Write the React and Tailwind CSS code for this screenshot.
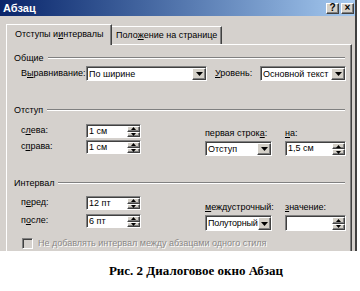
import React from "react";

const raised =
  "bg-[#d4d0c8] border border-t-white border-l-white border-r-[#404040] border-b-[#404040] shadow-[inset_-1px_-1px_0_#808080]";
const sunken =
  "bg-white border border-t-[#808080] border-l-[#808080] border-r-white border-b-white shadow-[inset_1px_1px_0_#404040]";

function U({ children }) {
  return <span className="underline underline-offset-[1px] decoration-1">{children}</span>;
}

function ArrowUp() {
  return (
    <svg width="5" height="3" viewBox="0 0 5 3">
      <polygon points="2.5,0 5,3 0,3" fill="#000" />
    </svg>
  );
}
function ArrowDown({ w = 5, h = 3 }) {
  return (
    <svg width={w} height={h} viewBox={`0 0 ${w} ${h}`}>
      <polygon points={`0,0 ${w},0 ${w / 2},${h}`} fill="#000" />
    </svg>
  );
}

function Spinner({ className, value }) {
  return (
    <div className={`flex box-border ${sunken} ${className}`}>
      <div className="flex-1 pl-[2px] pt-[1px] leading-[11px] whitespace-nowrap overflow-hidden">{value}</div>
      <div className="w-[13px] flex flex-col pt-[1px]">
        <div className={`flex-1 flex items-center justify-center ${raised}`}>
          <ArrowUp />
        </div>
        <div className={`flex-1 flex items-center justify-center ${raised}`}>
          <ArrowDown />
        </div>
      </div>
    </div>
  );
}

function Select({ className, value }) {
  return (
    <div className={`flex box-border ${sunken} ${className}`}>
      <div className="flex-1 pl-[2px] pt-[1px] leading-[12px] whitespace-nowrap">{value}</div>
      <div className={`w-[14px] mt-[1px] flex items-center justify-center ${raised}`}>
        <ArrowDown w={7} h={4} />
      </div>
    </div>
  );
}

function GroupHeader({ children }) {
  return (
    <div className="flex items-center h-[12px] pl-[7px] pr-[6px]">
      <span className="leading-[12px]">{children}</span>
      <div className="flex-1 ml-[4px] h-[2px] border-t border-t-[#808080] border-b border-b-white" />
    </div>
  );
}

export default function App() {
  return (
    <div className="w-[360px] h-[291px] bg-white overflow-hidden font-['Liberation_Sans',Arial,sans-serif] text-[9px] text-black">
      {/* Dialog */}
      <div className="w-[357px] h-[251px] bg-[#d5d1cd] border-r-2 border-r-[#404040] box-border flex flex-col">
        {/* Title bar */}
        <div className="h-[16px] bg-linear-to-r from-[#0a246a] to-[#a6caf0] flex items-center justify-between pl-[3px] pr-[1px]">
          <span className="text-white font-bold text-[11px] leading-[12px]">Абзац</span>
          <div className="flex gap-[2px]">
            <div className={`w-[13px] h-[11px] flex items-center justify-center text-[10px] font-bold leading-[10px] ${raised}`}>?</div>
            <div className={`w-[13px] h-[11px] flex items-center justify-center text-[10px] font-bold leading-[10px] ${raised}`}>×</div>
          </div>
        </div>

        {/* Tabs */}
        <div className="flex items-end pl-[6px] mt-[8px] relative z-10">
          <div className="w-[106px] h-[21px] -mb-[1px] pl-[8px] flex items-center bg-[#d5d1cd] border-t border-l border-t-white border-l-white border-r border-r-[#404040] shadow-[inset_-1px_0_0_#808080] whitespace-nowrap">
            Отступы и <U>и</U>нтервалы
          </div>
          <div className="w-[110px] h-[18px] pl-[4px] flex items-center border-t border-t-white border-r border-r-[#404040] shadow-[inset_-1px_0_0_#808080] whitespace-nowrap">
            Поло<U>ж</U>ение на странице
          </div>
        </div>

        {/* Panel */}
        <div className="ml-[6px] w-[346px] flex-1 box-border border-t border-l border-t-white border-l-white border-r border-r-[#404040] shadow-[inset_-1px_0_0_#808080]">
          <div className="mt-[7px]">
            <GroupHeader>Общие</GroupHeader>
          </div>
          <div className="flex items-center h-[15px] mt-[2px] pl-[14px]">
            <span className="w-[65px] whitespace-nowrap">В<U>ы</U>равнивание:</span>
            <Select className="w-[121px] h-[15px]" value="По ширине" />
            <span className="ml-[8px] w-[45px] whitespace-nowrap"><U>У</U>ровень:</span>
            <Select className="w-[86px] h-[15px]" value="Основной текст" />
          </div>

          <div className="mt-[23px]">
            <GroupHeader>Отступ</GroupHeader>
          </div>
          <div className="flex mt-[8px]">
            <div className="flex flex-col gap-[2px] pl-[14px]">
              <div className="flex items-center h-[14px]">
                <span className="w-[65px]">с<U>л</U>ева:</span>
                <Spinner className="w-[55px] h-[14px]" value="1 см" />
              </div>
              <div className="flex items-center h-[14px]">
                <span className="w-[65px]">с<U>п</U>рава:</span>
                <Spinner className="w-[55px] h-[14px]" value="1 см" />
              </div>
            </div>
            <div className="flex ml-[64px] mt-[4px]">
              <div className="flex flex-col w-[67px]">
                <span className="h-[13px] leading-[11px] whitespace-nowrap">первая строк<U>а</U>:</span>
                <Select className="w-[67px] h-[15px]" value="Отступ" />
              </div>
              <div className="flex flex-col w-[61px] ml-[13px]">
                <span className="h-[13px] leading-[11px]"><U>н</U>а:</span>
                <Spinner className="w-[61px] h-[15px]" value="1,5 см" />
              </div>
            </div>
          </div>

          <div className="mt-[21px]">
            <GroupHeader>Интервал</GroupHeader>
          </div>
          <div className="flex mt-[7px]">
            <div className="flex flex-col gap-[4px] pl-[14px]">
              <div className="flex items-center h-[14px]">
                <span className="w-[65px]">п<U>е</U>ред:</span>
                <Spinner className="w-[55px] h-[14px]" value="12 пт" />
              </div>
              <div className="flex items-center h-[14px]">
                <span className="w-[65px]">п<U>о</U>сле:</span>
                <Spinner className="w-[55px] h-[14px]" value="6 пт" />
              </div>
            </div>
            <div className="flex ml-[64px] mt-[6px]">
              <div className="flex flex-col w-[67px]">
                <span className="h-[13px] leading-[11px] whitespace-nowrap"><U>м</U>еждустрочный:</span>
                <Select className="w-[67px] h-[16px] tracking-[-0.2px]" value="Полуторный" />
              </div>
              <div className="flex flex-col w-[61px] ml-[13px]">
                <span className="h-[13px] leading-[11px]"><U>з</U>начение:</span>
                <Spinner className="w-[61px] h-[16px]" value="" />
              </div>
            </div>
          </div>

          <div className="flex items-center mt-[6px] pl-[15px]">
            <div className="w-[11px] h-[11px] box-border border border-t-[#808080] border-l-[#808080] border-r-white border-b-white shadow-[inset_1px_1px_0_#404040] bg-[#d5d1cd]" />
            <span className="ml-[5px] text-[#8a8886] [text-shadow:1px_1px_0_#ffffff] whitespace-nowrap">
              Не добавлять интервал между абзацами одного стиля
            </span>
          </div>
        </div>
      </div>

      {/* Caption */}
      <div className="pl-[32px] mt-[12px] text-center font-['Liberation_Serif','Times_New_Roman',serif] font-bold text-[13px] leading-[15px]">
        Рис. 2 Диалоговое окно Абзац
      </div>
    </div>
  );
}
